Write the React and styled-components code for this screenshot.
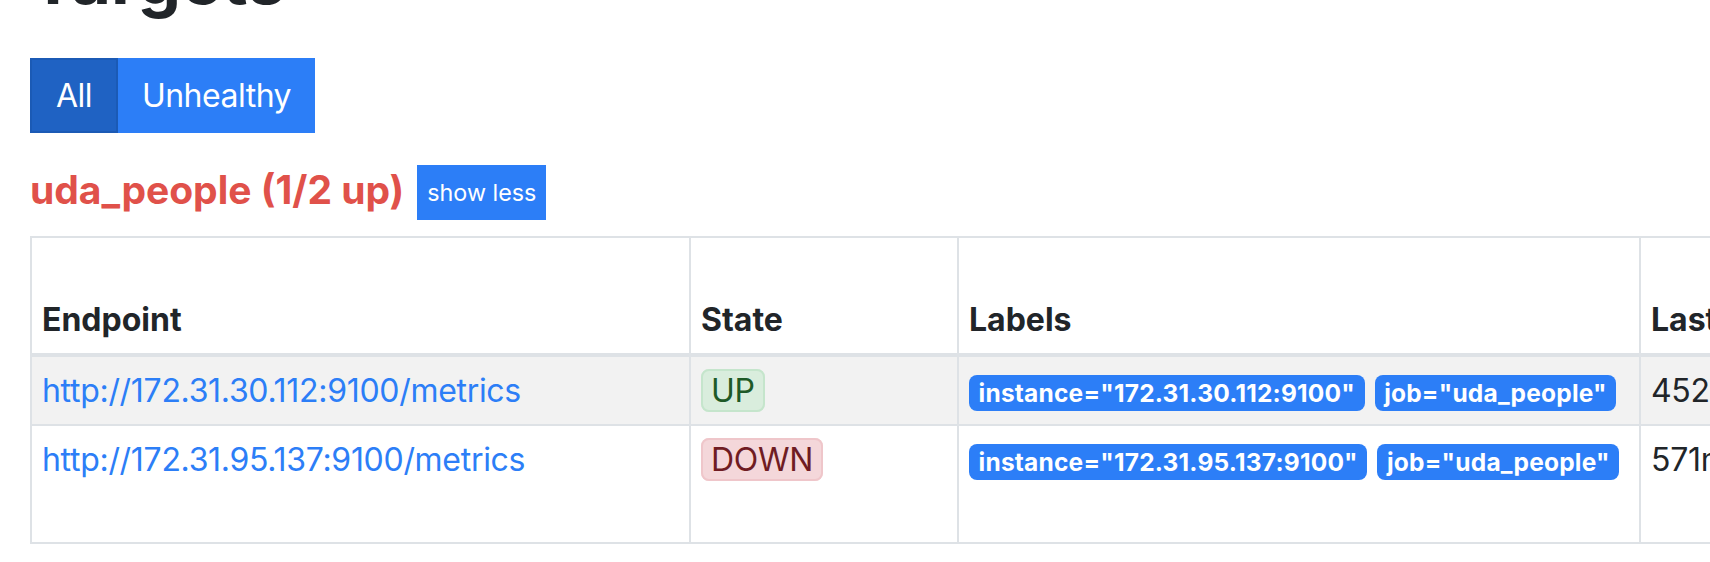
import React from 'react';
import styled, { createGlobalStyle } from 'styled-components';

// Global
const GlobalStyle = createGlobalStyle`
  * {
    box-sizing: border-box;
  }

  html, body {
    margin: 0;
    padding: 0;
    background: #FFF;
    overflow: hidden;
  }

  body {
    font-family: Inter, "Noto Sans", "Liberation Sans", sans-serif;
    font-size: 32px;
    line-height: 1.5;
    color: #212529;
  }
`;

// Data
const targets = [
  {
    endpoint: 'http://172.31.30.112:9100/metrics',
    state: 'UP',
    labels: ['instance="172.31.30.112:9100"', 'job="uda_people"'],
    lastScrape: '452ms ago',
    duration: '12.3ms',
    error: '',
  },
  {
    endpoint: 'http://172.31.95.137:9100/metrics',
    state: 'DOWN',
    labels: ['instance="172.31.95.137:9100"', 'job="uda_people"'],
    lastScrape: '571ms ago',
    duration: '10s',
    error: 'Get http://172.31.95.137:9100/metrics: context deadline exceeded',
  },
];

const columns = [
  { title: 'Endpoint', width: 659 },
  { title: 'State', width: 268 },
  { title: 'Labels', width: 682 },
  { title: 'Last Scrape', width: 300 },
  { title: 'Scrape Duration', width: 220 },
  { title: 'Error', width: 700 },
];

// Styled
const Page = styled.div`
  width: 1710px;
  height: 562px;
  padding: 0 30px;
  overflow: hidden;
`;

const Title = styled.h2`
  margin: -55px 0 44px;
  font-size: 69px;
  line-height: 69px;
  font-weight: 700;
`;

const ButtonGroup = styled.div`
  display: flex;
`;

const FilterButton = styled.button`
  width: ${props => props.$width}px;
  height: 75px;
  padding: 0;
  border: 2px solid ${props => (props.$active ? '#1b5ab5' : '#2c7ef7')};
  background: ${props => (props.$active ? '#1f62c3' : '#2c7ef7')};
  color: #FFF;
  font-family: inherit;
  font-size: 32px;
  line-height: 48px;
  letter-spacing: -0.5px;
  text-align: center;
  cursor: pointer;
`;

const JobHeader = styled.div`
  display: flex;
  align-items: flex-start;
  height: 55px;
  margin-top: 32px;
`;

const JobTitle = styled.h2`
  margin: 0;
  font-size: 39px;
  line-height: 49px;
  font-weight: 700;

  a {
    color: #e0514a;
    text-decoration: none;
  }
`;

const ShowLess = styled.button`
  height: 55px;
  margin-left: 13px;
  padding: 0 10px;
  border: none;
  background: #2c7ef7;
  color: #FFF;
  font-family: inherit;
  font-size: 23.3px;
  cursor: pointer;
`;

const Table = styled.table`
  margin-top: 16px;
  border-collapse: collapse;
  table-layout: fixed;
  width: ${props => props.$width}px;
`;

const Col = styled.col`
  width: ${props => props.$width}px;
`;

const Th = styled.th`
  padding: 9.6px 10px;
  border: 2px solid #dee2e6;
  border-bottom-width: 4px;
  text-align: left;
  vertical-align: bottom;
  font-weight: 700;
`;

const Row = styled.tr`
  background: ${props => (props.$striped ? '#f2f2f2' : '#FFF')};
`;

const Td = styled.td`
  padding: 9.6px 10px;
  border: 2px solid #dee2e6;
  vertical-align: top;
  letter-spacing: -0.3px;
  white-space: ${props => (props.$nowrap ? 'nowrap' : 'normal')};
`;

const EndpointLink = styled.a`
  color: #2c7ef7;
  text-decoration: none;
`;

const StateBadge = styled.span`
  padding: 0 8px;
  border: 2px solid ${props => (props.$up ? '#c5e5cc' : '#efc6ca')};
  border-radius: 8px;
  background: ${props => (props.$up ? '#d9eddd' : '#f4d7da')};
  color: ${props => (props.$up ? '#1e5a27' : '#6f1c23')};
`;

const LabelBadge = styled.span`
  display: inline-block;
  margin-right: 10px;
  padding: 6px 9.6px;
  border-radius: 8px;
  background: #2c7ef7;
  color: #FFF;
  font-size: 24.5px;
  font-weight: 700;
  line-height: 24px;
  letter-spacing: 0.2px;
  white-space: nowrap;
`;

const App = () => {
  const tableWidth = columns.reduce((sum, col) => sum + col.width, 0);

  return (
    <>
      <GlobalStyle />
      <Page>
        <Title>Targets</Title>

        <ButtonGroup>
          <FilterButton $active $width={88}>All</FilterButton>
          <FilterButton $width={197}>Unhealthy</FilterButton>
        </ButtonGroup>

        <JobHeader>
          <JobTitle>
            <a href="#job-uda_people">uda_people (1/2 up)</a>
          </JobTitle>
          <ShowLess type="button">show less</ShowLess>
        </JobHeader>

        <Table $width={tableWidth}>
          <colgroup>
            {columns.map(col => (
              <Col key={col.title} $width={col.width} />
            ))}
          </colgroup>
          <thead>
            <tr>
              {columns.map(col => (
                <Th key={col.title}>{col.title}</Th>
              ))}
            </tr>
          </thead>
          <tbody>
            {targets.map((item, index) => (
              <Row key={item.endpoint} $striped={index % 2 === 0}>
                <Td>
                  <EndpointLink href={item.endpoint}>{item.endpoint}</EndpointLink>
                </Td>
                <Td>
                  <StateBadge $up={item.state === 'UP'}>{item.state}</StateBadge>
                </Td>
                <Td $nowrap>
                  {item.labels.map(label => (
                    <LabelBadge key={label}>{label}</LabelBadge>
                  ))}
                </Td>
                <Td>{item.lastScrape}</Td>
                <Td>{item.duration}</Td>
                <Td>{item.error}</Td>
              </Row>
            ))}
          </tbody>
        </Table>
      </Page>
    </>
  );
};

export default App;
